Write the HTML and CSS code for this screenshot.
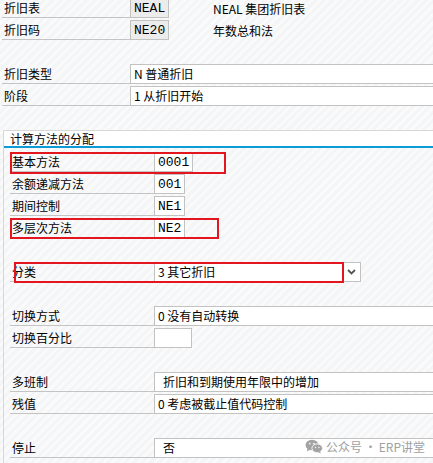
FILE: index.html
```html
<!DOCTYPE html>
<html lang="zh">
  <head>
    <meta charset="UTF-8" />
    <title>折旧码</title>
    <link rel="stylesheet" href="styles.css">
  </head>
  <body>
    <div class="form">
      <div class="row top">
        <div class="lbl">折旧表</div>
        <div class="fld ro code w39">NEAL</div>
        <div class="desc">NEAL 集团折旧表</div>
      </div>
      <div class="row top">
        <div class="lbl">折旧码</div>
        <div class="fld ro code w39">NE20</div>
        <div class="desc">年数总和法</div>
      </div>
      <div class="row"></div>
      <div class="row top">
        <div class="lbl">折旧类型</div>
        <div class="fld wide">N 普通折旧</div>
      </div>
      <div class="row top">
        <div class="lbl">阶段</div>
        <div class="fld wide">1 从折旧开始</div>
      </div>
      <div class="row"></div>

      <div class="group">
        <div class="group-title">计算方法的分配</div>
        <div class="row sub">
          <div class="lbl">基本方法</div>
          <div class="fld code w39">0001</div>
        </div>
        <div class="row sub">
          <div class="lbl">余额递减方法</div>
          <div class="fld code w31">001</div>
        </div>
        <div class="row sub">
          <div class="lbl">期间控制</div>
          <div class="fld code w31">NE1</div>
        </div>
        <div class="row sub">
          <div class="lbl">多层次方法</div>
          <div class="fld code w31">NE2</div>
        </div>
        <div class="row"></div>
        <div class="row sub">
          <div class="lbl">分类</div>
          <div class="fld w189">3 其它折旧</div>
          <div class="drop">
            <svg width="9" height="6" viewBox="0 0 9 6"><path d="M1 1 L4.5 4.5 L8 1" fill="none" stroke="#555" stroke-width="1.8"/></svg>
          </div>
        </div>
        <div class="row"></div>
        <div class="row sub">
          <div class="lbl">切换方式</div>
          <div class="fld wide">0 没有自动转换</div>
        </div>
        <div class="row sub">
          <div class="lbl">切换百分比</div>
          <div class="fld w38"></div>
        </div>
        <div class="row"></div>
        <div class="row sub">
          <div class="lbl">多班制</div>
          <div class="fld wide pad">折旧和到期使用年限中的增加</div>
        </div>
        <div class="row sub">
          <div class="lbl">残值</div>
          <div class="fld wide">0 考虑被截止值代码控制</div>
        </div>
        <div class="row"></div>
        <div class="row sub">
          <div class="lbl">停止</div>
          <div class="fld wide pad">否</div>
        </div>
      </div>
    </div>

    <!-- annotations -->
    <div class="mark m1"></div>
    <div class="mark m2"></div>
    <div class="mark m3"></div>

    <div class="watermark">
      <svg width="18" height="15" viewBox="0 0 18 15">
        <ellipse cx="7" cy="6" rx="6.5" ry="5.3" fill="#a3a3a3"/>
        <path d="M2.5 9.5 L2 12.5 L5.5 10.5 Z" fill="#a3a3a3"/>
        <ellipse cx="12.2" cy="9.3" rx="5.3" ry="4.4" fill="#a3a3a3" stroke="#f7f7f7" stroke-width="1"/>
        <path d="M15 12.5 L16 14.5 L13 13.2 Z" fill="#a3a3a3"/>
        <circle cx="4.8" cy="4.6" r="0.9" fill="#f7f7f7"/>
        <circle cx="8.8" cy="4.6" r="0.9" fill="#f7f7f7"/>
        <circle cx="10.5" cy="8.5" r="0.7" fill="#f7f7f7"/>
        <circle cx="13.9" cy="8.5" r="0.7" fill="#f7f7f7"/>
      </svg>
      <span>公众号&#8201;·&#8201;ERP讲堂</span>
    </div>
  </body>
</html>
```

FILE: styles.css
```css
body {
  margin: 0;
  height: 463px;
  overflow: hidden;
  position: relative;
  font-family: "Noto Sans CJK SC", "Liberation Sans", sans-serif;
  font-size: 12px;
  color: #000;
  background: repeating-linear-gradient(135deg, #f4f5f6 0 3px, #fafafb 3px 6px);
}
.form {
  display: flex;
  flex-direction: column;
  gap: 2px;
  margin-top: -2px;
}
.row {
  display: flex;
  height: 20px;
  align-items: stretch;
}
.row.top {
  padding-left: 2px;
}
.lbl {
  box-sizing: border-box;
  border-bottom: 1px solid #c4c4c4;
  padding-left: 2px;
  display: flex;
  align-items: center;
  line-height: 1;
}
.top .lbl {
  width: 128px;
}
.sub {
  padding-left: 6px;
}
.sub .lbl {
  width: 144px;
}
.fld {
  box-sizing: border-box;
  border: 1px solid #c2c2c2;
  background: #fff;
  display: flex;
  align-items: center;
  padding-left: 3px;
  line-height: 1;
  white-space: nowrap;
}
.fld.ro {
  background: #ececec;
}
.fld.code {
  font-family: "Liberation Mono", monospace;
  font-size: 13px;
  padding-left: 3px;
}
.fld.pad {
  padding-left: 8px;
}
.w39 { width: 39px; }
.w38 { width: 38px; }
.w31 { width: 31px; }
.w189 { width: 189px; }
.wide {
  flex: 1;
  margin-right: -3px;
}
.desc {
  margin-left: 44px;
  display: flex;
  align-items: center;
}
.drop {
  box-sizing: border-box;
  width: 18px;
  border: 1px solid #c2c2c2;
  border-left: none;
  background: #fff;
  display: flex;
  align-items: center;
  justify-content: center;
}
.group {
  margin-left: 3px;
  border-left: 1px solid #d8d8d8;
  display: flex;
  flex-direction: column;
  gap: 2px;
  height: 340px;
}
.group-title {
  box-sizing: border-box;
  height: 18px;
  margin-bottom: 2px;
  background: #fff;
  border-top: 1px solid #d8d8d8;
  border-bottom: 2px solid #0c9bd7;
  padding-left: 6px;
  display: flex;
  align-items: center;
  line-height: 1;
}
.mark {
  position: absolute;
  border: 2px solid #e3161f;
  box-sizing: border-box;
}
.m1 { left: 10px; top: 152px; width: 216px; height: 22px; }
.m2 { left: 10px; top: 218px; width: 209px; height: 21px; }
.m3 { left: 14px; top: 262px; width: 330px; height: 21px; }
.watermark {
  position: absolute;
  left: 305px;
  top: 438px;
  display: flex;
  align-items: center;
  gap: 3px;
  color: #a0a0a0;
  font-size: 12px;
  white-space: nowrap;
}
```
